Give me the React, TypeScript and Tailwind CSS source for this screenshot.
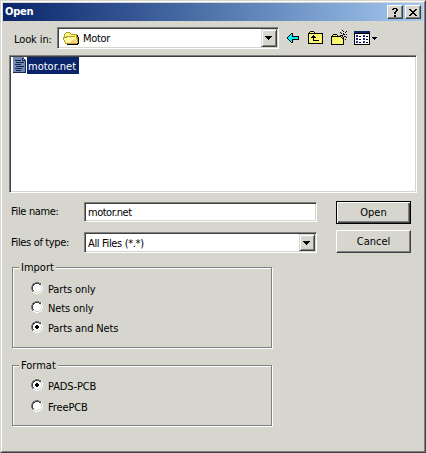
import React from "react";

const palette: Record<string, string> = {
  "#": "#000000", c: "#00f0f8", y: "#f8f040", l: "#fcfca0", w: "#ffffff", g: "#808080", k: "#404040", e: "#d6d6ce",
  n: "#0a246a", b: "#2828a0", s: "#7088b8", d: "#182848", o: "#b89820", p: "#f8d088", m: "#a8b0d0",
};

function Pixels({ rows, className = "" }: { rows: string[]; className?: string }) {
  const w = rows[0].length;
  return (
    <svg className={`block shrink-0 ${className}`} width={w} height={rows.length} shapeRendering="crispEdges" aria-hidden="true">
      {rows.flatMap((row, y) =>
        row.split("").map((ch, x) =>
          palette[ch] ? <rect key={`${x}-${y}`} x={x} y={y} width={1} height={1} fill={palette[ch]} /> : null
        )
      )}
    </svg>
  );
}

const back = [
  "....##......",
  "...#c#......",
  "..#cc#......",
  ".#ccc#######",
  "#cccccccccc#",
  "#cccccccccc#",
  ".#ccc#######",
  "..#cc#......",
  "...#c#......",
  "....##......",
];
const up = [
  "..####.........",
  ".#ylyl#........",
  "###############",
  "#ylylylylylyly#",
  "#lyly#ylylylyl#",
  "#yly###ylylyly#",
  "#ly#####lylyly#",
  "#ylyl#lylylyly#",
  "#lyly#ylylylyl#",
  "#ylyl######yly#",
  "#lylylylylylyl#",
  "#ylylylylylyly#",
  "###############",
];
const create = [
  "...........#....",
  "............#..#",
  ".........#....#.",
  "..........#.#...",
  "..####......##.#",
  ".#ylyl#..###....",
  "##########.#.##.",
  "#yyyyyyyyy#.#..#",
  "#ylylylylyl##...",
  "#lylylylylyy#.#.",
  "#ylylylylyly#...",
  "#lylylylylyl#...",
  "#ylylylylyly#...",
  "#lylylylylyl#...",
  "#############...",
];
const view = [
  "nnnnnnnnnnnnnnnn",
  "nnnnnnnnnnnnnnnn",
  "################",
  "#wwwwwwwwwwwwww#",
  "#wbbwwwwwbbwwww#",
  "#wnbw##wwnbw##w#",
  "#wwwwwwwwwwwwww#",
  "#wbbwwwwwbbwwww#",
  "#wnbw##wwnbw##w#",
  "#wwwwwwwwwwwwww#",
  "#wbbwwwwwbbwwww#",
  "#wnbw##wwnbw##w#",
  "#wwwwwwwwwwwwww#",
  "################",
];
const folder = [
  "...oooo.........",
  "..olllyo........",
  ".ollllyyoooooo..",
  ".olllllllllyyo#.",
  ".oloooooooooyo#.",
  "oooollllllllloo#",
  "olllllllllllyoo#",
  "ollllllllllpyyo#",
  ".olllllllppppyo#",
  ".ollllllpppppyo#",
  "..ollllppppppyy#",
  "..oooooooooooo##",
  "....###########.",
];
const note = [
  "sssssssssss..",
  "sssssssssdd..",
  "sssssssssdmd.",
  "ssddddddsdddd",
  "ssssssssssssd",
  "sssddddddddsd",
  "ssssssssssssd",
  "ssddddddssssd",
  "ssssssssssssd",
  "sssddddddddsd",
  "ssssssssssssd",
  "ssdddddddsssd",
  "ssssssssssssd",
  "sssdddddssssd",
  "ssssssssssssd",
  "ddddddddddddd",
];
const down = ["#######", ".#####.", "..###..", "...#..."];
const smallDown = ["#####", ".###.", "..#.."];
const question = [".####..", "##..##.", "....##.", "...##..", "..##...", "..##...", ".......", "..##...", "..##..."];
const close = ["##....##", ".##..##.", "..####..", "...##...", "..####..", ".##..##.", "##....##"];
const radioBase = [
  "....gggg....",
  "..ggkkkkgg..",
  ".gkkwwwwkkw.",
  ".gkwwwwwwew.",
  "gkwwwwwwwwew",
  "gkwwwwwwwwew",
  "gkwwwwwwwwew",
  "gkwwwwwwwwew",
  ".gkwwwwwwew.",
  ".geewwwweew.",
  "..wweeeeww..",
  "....wwww....",
];
const radioOn = radioBase.map((row, y) => {
  const dot: Record<number, string> = { 4: "w##w", 5: "####", 6: "####", 7: "w##w" };
  return dot[y] ? row.slice(0, 4) + dot[y] + row.slice(8) : row;
});

const sunken =
  "bg-white border border-t-[#808080] border-l-[#808080] border-r-white border-b-white shadow-[inset_1px_1px_#404040,inset_-1px_-1px_#d6d6ce]";
const raised =
  "bg-[#d6d6ce] border border-t-white border-l-white border-r-[#404040] border-b-[#404040] shadow-[inset_-1px_-1px_#808080]";

function DropButton({ className }: { className: string }) {
  return (
    <button className={`flex w-4 shrink-0 items-center justify-start border border-t-[#d6d6ce] border-l-[#d6d6ce] border-r-[#404040] border-b-[#404040] bg-[#d6d6ce] pl-[3px] shadow-[inset_1px_1px_white,inset_-1px_-1px_#808080] ${className}`}>
      <Pixels rows={down} />
    </button>
  );
}

function Radio({ label, on = false, className = "" }: { label: string; on?: boolean; className?: string }) {
  return (
    <label className={`flex h-3 items-start ${className}`}>
      <Pixels rows={on ? radioOn : radioBase} />
      <span className="mt-px ml-[5px] tracking-[-0.12px]">{label}</span>
    </label>
  );
}

function Group({ title, className, children }: { title: string; className: string; children: React.ReactNode }) {
  return (
    <section className={`relative ml-[9px] w-[260px] border border-[#808080] shadow-[inset_1px_1px_white,1px_1px_white] ${className}`}>
      <h2 className="absolute -top-[7px] left-[6px] bg-[#d6d6ce] px-[2px] leading-[14px]">{title}</h2>
      {children}
    </section>
  );
}

export default function App() {
  return (
    <main className="h-[453px] w-[426px] overflow-hidden border border-t-[#d6d6ce] border-l-[#d6d6ce] border-r-[#404040] border-b-[#404040] bg-[#d6d6ce] font-['DejaVu_Sans_Condensed','DejaVu_Sans',sans-serif] text-[11px] leading-[14px] whitespace-nowrap text-black">
      <div className="h-full border border-t-white border-l-white border-r-[#808080] border-b-[#808080] p-px">
        <header className="flex h-[18px] items-center bg-linear-to-r from-[#0a246a] to-[#a6caf0] pr-[2px] pl-[2px]">
          <h1 className="font-bold tracking-[-0.2px] text-white">Open</h1>
          <button className={`ml-auto flex h-[14px] w-4 items-center justify-center ${raised}`}><Pixels rows={question} /></button>
          <button className={`ml-[2px] flex h-[14px] w-4 items-center justify-center ${raised}`}><Pixels rows={close} /></button>
        </header>

        <div className="mt-[6px] flex h-[22px] items-start">
          <span className="mt-[6px] ml-[11px] w-[43px] tracking-[-0.1px]">Look in:</span>
          <div className={`flex h-[22px] w-[222px] items-center pr-px pl-[5px] ${sunken}`}>
            <Pixels rows={folder} />
            <span className="ml-1 flex-1 pt-[2px] tracking-[-0.3px]">Motor</span>
            <DropButton className="h-[18px]" />
          </div>
          <Pixels rows={back} className="mt-[6px] ml-2" />
          <Pixels rows={up} className="mt-1 ml-[9px]" />
          <Pixels rows={create} className="mt-[3px] ml-2" />
          <Pixels rows={view} className="mt-1 ml-[7px]" />
          <Pixels rows={smallDown} className="mt-[10px] ml-[2px]" />
        </div>

        <div className={`mt-[6px] ml-[6px] flex h-[138px] w-[408px] items-start pt-px pl-[3px] ${sunken}`}>
          <Pixels rows={note} />
          <span className="ml-px h-[17px] w-[52px] bg-[#0a246a] pl-px leading-[19px] text-white">motor.net</span>
        </div>

        <div className="mt-2 flex h-[23px] items-start">
          <span className="mt-1 ml-2 w-[73px] tracking-[-0.35px]">File name:</span>
          <div className={`mt-px h-5 w-[233px] pt-[3px] pl-[3px] tracking-[-0.5px] ${sunken}`}>motor.net</div>
          <button className="ml-[19px] h-[23px] w-[75px] border border-black bg-[#d6d6ce] shadow-[inset_1px_1px_white,inset_-1px_-1px_#404040,inset_-2px_-2px_#808080]">Open</button>
        </div>
        <div className="mt-[6px] flex h-[23px] items-start">
          <span className="mt-[6px] ml-2 w-[73px] tracking-[-0.35px]">Files of type:</span>
          <div className={`mt-[2px] flex h-[21px] w-[233px] items-center pr-px pl-[3px] ${sunken}`}>
            <span className="flex-1 pt-[3px] tracking-[-0.35px]">All Files (*.*)</span>
            <DropButton className="h-[17px]" />
          </div>
          <button className={`ml-[19px] h-[23px] w-[75px] ${raised}`}>Cancel</button>
        </div>

        <Group title="Import" className="mt-[14px] h-[81px] pt-[14px] pl-[18px]">
          <Radio label="Parts only" />
          <Radio label="Nets only" className="mt-[7px]" />
          <Radio label="Parts and Nets" on className="mt-2" />
        </Group>
        <Group title="Format" className="mt-[17px] h-[61px] pt-[13px] pl-[18px]">
          <Radio label="PADS-PCB" on />
          <Radio label="FreePCB" className="mt-[9px]" />
        </Group>
      </div>
    </main>
  );
}
